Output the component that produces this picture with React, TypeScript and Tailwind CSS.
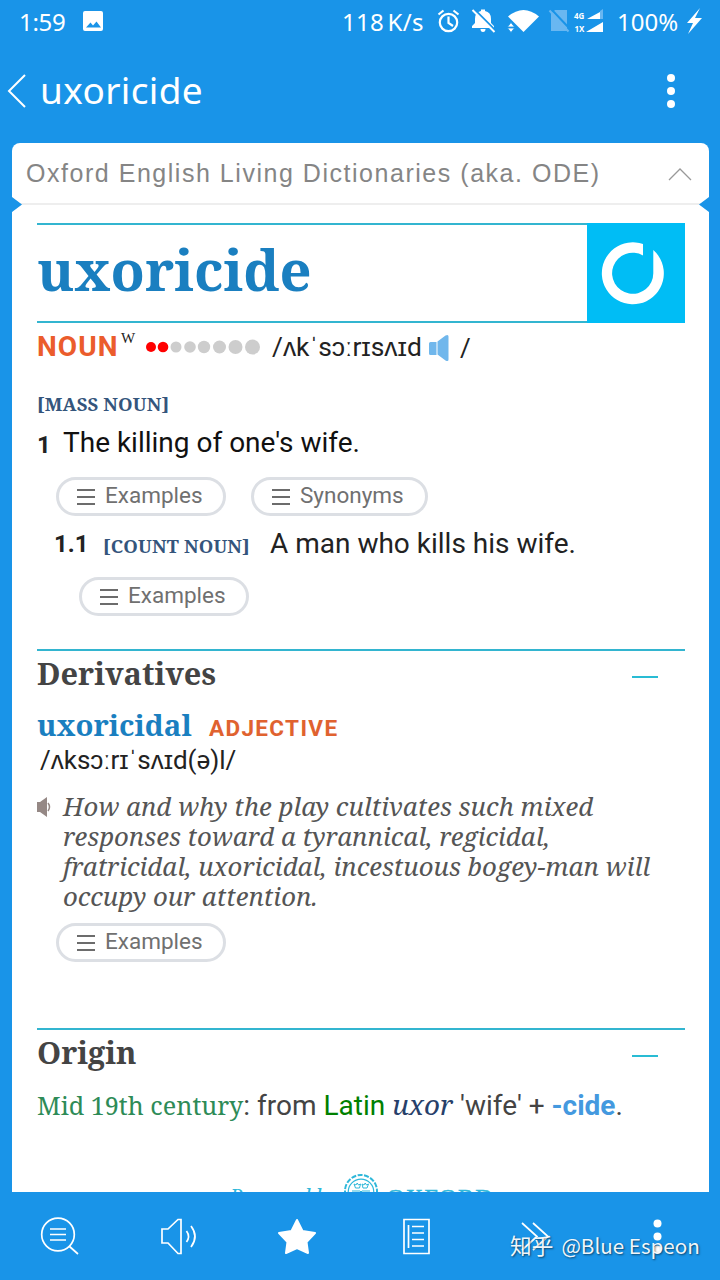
import React from "react";

const serif = "font-['Noto_Serif','DejaVu_Serif_Condensed','DejaVu_Serif',serif]";

function StatusBar() {
  return (
    <div className="flex h-[44px] items-center pl-[19px] font-['Noto_Sans',sans-serif] text-[24px] font-[370] text-white">
      <span className="w-[63px] tracking-[-0.300px]">1:59</span>
      <svg className="h-[44px] w-[22px]" viewBox="82 0 22 44" fill="#fff">
        <path fillRule="evenodd" d="M85 11h16q2 0 2 2v16q0 2-2 2H85q-2 0-2-2V13q0-2 2-2ZM86 27.500h15l-4.500-6-3.500 4-2.500-3Z" />
      </svg>
      <span className="ml-[238px] w-[92px] whitespace-nowrap tracking-[0.300px] [word-spacing:-3px]">118 K/s</span>
      <svg className="h-[44px] w-[172px]" viewBox="434 0 172 44" fill="none">
        <g stroke="#fff" strokeWidth="2.200">
          <circle cx="448.500" cy="22.500" r="8.700" />
          <path d="M448.500 16.500v6.500l4.500 3M438.500 14.500l5-4M458.500 14.500l-5-4" />
        </g>
        <path fill="#fff" d="M472 28v-2l3-3v-4q0-7 6-8V9.500h4V11q6 1 6 8v4l3 3v2ZM480.500 29h5q0 3-2.500 3t-2.500-3Z" />
        <path stroke="#1994e8" strokeWidth="2" d="m474 9 22 22" />
        <path stroke="#fff" strokeWidth="2" d="m472.500 10 22 22" />
        <path fill="#fff" d="M508 16.500Q523.500 3.500 539 16.500L523.500 32Z" />
        <path fill="#fff" stroke="#1994e8" strokeWidth="0.800" d="M511 22.500l3.500 4.500h-7ZM507.500 28h7l-3.500 4.500Z" />
        <path fill="#69b7f1" d="M555 10h12v21h-16V14Z" />
        <path stroke="#1994e8" strokeWidth="2" d="m551 9 19 20" />
        <path stroke="#69b7f1" strokeWidth="2" d="m549.500 10.500 19 21" />
        <path fill="#fff" d="m587 19 13-7v7ZM586 32l17-10v10Z" />
        <path fill="#69b7f1" d="m600 11 3-2v10h-3Z" />
        <text x="574" y="18.500" fill="#fff" fontSize="8" fontWeight="700" fontFamily="Noto Sans">4G</text>
        <text x="574.500" y="32" fill="#fff" fontSize="8" fontWeight="700" fontFamily="Noto Sans">1X</text>
      </svg>
      <span className="ml-[11px] w-[68px] whitespace-nowrap">100%</span>
      <svg className="h-[44px] w-[18px]" viewBox="685 0 18 44" fill="#fff">
        <path d="m700 8-13 15h6l-5 11 14-16h-7Z" />
      </svg>
    </div>
  );
}

function TitleBar() {
  return (
    <div className="flex h-[98px] items-center text-white">
      <svg className="h-[98px] w-[40px]" viewBox="0 44 40 98" fill="none" stroke="#fff" strokeWidth="2">
        <path d="m25 75-16 16 16 16" />
      </svg>
      <h1 className="w-[627px] -translate-y-[4px] font-['Noto_Sans',sans-serif] text-[37px] leading-none font-[380] tracking-[0.350px]">uxoricide</h1>
      <div className="flex -translate-y-[2px] flex-col gap-[5px]">
        <i className="size-[8px] rounded-full bg-white" />
        <i className="size-[8px] rounded-full bg-white" />
        <i className="size-[8px] rounded-full bg-white" />
      </div>
    </div>
  );
}

function Pill({ label, className }: { label: string; className: string }) {
  return (
    <button className={`flex h-[39px] items-center rounded-full border-[3px] border-[#dcdfe4] pl-[18px] font-[Roboto,sans-serif] text-[22.500px] text-[#707070] ${className}`}>
      <span className="mt-[1px] mr-[10px] flex w-[18px] flex-col gap-[5px]">
        <i className="h-[2px] bg-[#6c6c6c]" />
        <i className="h-[2px] bg-[#6c6c6c]" />
        <i className="h-[2px] bg-[#6c6c6c]" />
      </span>
      <span className="-mt-[2px]">{label}</span>
    </button>
  );
}

function SectionTitle({ title }: { title: string }) {
  return (
    <div className="flex h-[46px] shrink-0 items-center justify-between border-t-2 border-[#33b5d0] pr-[27px]">
      <h2 className={`mt-[1px] ${serif} text-[30.700px] leading-[41px] font-bold text-[#444]`}>{title}</h2>
      <i className="mt-[7px] h-[2px] w-[26px] bg-[#29bcd4]" />
    </div>
  );
}

function Frequency() {
  return (
    <svg className="h-[20px] w-[126px]" viewBox="140 338 126 20">
      <g fill="#f00"><circle cx="151" cy="348" r="5" /><circle cx="163" cy="348" r="5.300" /></g>
      <g fill="#cdcdcd">
        <circle cx="176" cy="348" r="5.500" /><circle cx="190" cy="348" r="5.800" />
        <circle cx="204" cy="348" r="6.200" /><circle cx="219.500" cy="348" r="6.500" />
        <circle cx="235.500" cy="348" r="7" /><circle cx="252.500" cy="348" r="7.500" />
      </g>
    </svg>
  );
}

function Entry() {
  return (
    <div className="flex h-[987px] flex-col overflow-hidden bg-white pt-[18px] pr-[24px] pl-[25px] font-[Roboto,sans-serif] text-[28px] whitespace-nowrap text-[#222]">
      <div className="flex h-[100px] shrink-0 border-y-2 border-[#33b5d0]">
        <h2 className={`flex-1 ${serif} pt-[2px] text-[56px] leading-[84px] font-bold text-[#1a7fc0]`}>uxoricide</h2>
        <div className="-my-[2px] w-[98px] bg-[#00bdf5]">
          <svg className="size-full" viewBox="587 223 98 100">
            <path fill="#fff" d="M643 244A31 31 0 1 0 653.300 250V273.300A20.600 20.600 0 1 1 643 255.400Z" />
          </svg>
        </div>
      </div>
      <div className="flex h-[48px] shrink-0 items-center">
        <span className="w-[84px] text-[28px] font-bold tracking-[1.100px] text-[#eb5c2c]">NOUN</span>
        <sup className="mr-[4px] w-[15px] -translate-y-[2px] font-['Liberation_Serif',serif] text-[15px]">W</sup>
        <Frequency />
        <span className="mt-[2px] ml-[6px] w-[156px] text-[26.400px]">/ʌkˈsɔːrɪsʌɪd</span>
        <svg className="mt-[1px] h-[28px] w-[23px]" viewBox="427.500 334 23 28" fill="#70b7ec">
          <path d="M430 342h6v13h-6q-1.500 0-1.500-1.500v-10q0-1.500 1.500-1.500ZM437 341.500l8-6q3-1.500 3 1v23q0 2.500-3 1l-8-6Z" />
        </svg>
        <span className="mt-[2px] ml-[9px] text-[26px]">/</span>
      </div>
      <div className={`mt-[17px] flex h-[31px] shrink-0 items-center ${serif} text-[18.500px] font-bold tracking-[0.150px] text-[#34557c]`}>[MASS NOUN]</div>
      <div className="mt-[1px] flex h-[44px] shrink-0 items-center">
        <b className="mt-[5px] w-[26px] text-[24px]">1</b>
        <span className="mt-[2px] text-[#111]">The killing of one's wife.</span>
      </div>
      <div className="mt-[13px] flex h-[39px] shrink-0 gap-[25px] pl-[19px]">
        <Pill label="Examples" className="w-[170px]" />
        <Pill label="Synonyms" className="w-[177px]" />
      </div>
      <div className="mt-[4px] flex h-[46px] shrink-0 items-center pl-[17px]">
        <b className="mt-[2px] w-[49px] text-[24px]">1.1</b>
        <span className={`mt-[5px] w-[167px] ${serif} text-[18.500px] font-bold tracking-[0.150px] text-[#34557c]`}>[COUNT NOUN]</span>
        <span className="mt-[2px]">A man who kills his wife.</span>
      </div>
      <div className="mt-[11px] mb-[33px] flex h-[39px] shrink-0 pl-[42px]">
        <Pill label="Examples" className="w-[170px]" />
      </div>
      <SectionTitle title="Derivatives" />
      <div className="mt-[5px] flex h-[52px] shrink-0 items-center">
        <span className={`w-[172px] ${serif} text-[29.300px] font-bold text-[#1a7fc0]`}>uxoricidal</span>
        <span className="mt-[6px] text-[22.500px] font-bold tracking-[1.350px] text-[#e0622f]">ADJECTIVE</span>
      </div>
      <div className="-mt-[7px] flex h-[30px] shrink-0 items-center pl-[3px] text-[26px]">/ʌksɔːrɪˈsʌɪd(ə)l/</div>
      <div className="mt-[16px] flex h-[120px] shrink-0">
        <svg className="mt-[6px] h-[20px] w-[26px]" viewBox="37 798 26 20">
          <path fill="#958885" d="M36 803h4l7-5v20l-7-5h-4Z" />
          <path fill="none" stroke="#958885" strokeWidth="1.500" d="M48 804q3 4 0 8" />
        </svg>
        <p className={`${serif} text-[25.750px] leading-[30px] text-[#555] italic`}>
          How and why the play cultivates such mixed<br />responses toward a tyrannical, regicidal,<br />fratricidal, uxoricidal, incestuous bogey-man will<br />occupy our attention.
        </p>
      </div>
      <div className="mt-[12px] mb-[66px] flex h-[39px] shrink-0 pl-[19px]">
        <Pill label="Examples" className="w-[170px]" />
      </div>
      <SectionTitle title="Origin" />
      <div className="mt-[10px] flex h-[46px] shrink-0 items-baseline whitespace-pre text-[#444]">
        <span className={`${serif} text-[25.200px] text-[#2e8b57]`}>Mid 19th century</span>
        <span>: from <span className="text-[#008000]">Latin</span> </span>
        <i className={`${serif} text-[27.800px] leading-[40px] text-[#27406a]`}>uxor</i>
        <span> 'wife' + <b className="text-[#4499df]">-cide</b>.</span>
      </div>
      <div className={`mt-[43px] flex h-[60px] shrink-0 ${serif} text-[#2fb8da]`}>
        <i className="mt-[8px] ml-[193px] w-[113px] text-[20px]">Powered by</i>
        <svg className="h-[40px] w-[36px]" viewBox="343 1173 36 40" fill="none" stroke="#2fb8da">
          <circle cx="361" cy="1191" r="16" strokeWidth="2" strokeDasharray="5 1.500" />
          <circle cx="361" cy="1192" r="12.800" strokeWidth="1.200" />
          <path d="M354 1184l1.500 4h4l1-4-2 1-1.300-2-1.200 2ZM362 1184l1 4h4l1.500-4-2 1-1.300-2-1.200 2ZM352 1191h8l1 1 1-1h8" />
        </svg>
        <span className="mt-[6px] ml-[8px] font-['Liberation_Serif',serif] text-[24px] tracking-[1.400px] [-webkit-text-stroke:0.500px_#2fb8da]">OXFORD</span>
      </div>
    </div>
  );
}

function Toolbar() {
  return (
    <div className="relative h-[88px]">
      <svg className="block h-[88px] w-[720px]" viewBox="0 1192 720 88" fill="none" stroke="#fff" strokeWidth="1.700">
        <circle cx="58" cy="1234.500" r="16.300" />
        <path d="m69 1246 9 8M50 1229h16M50 1234.500h16M50 1240h16" />
        <path d="M162 1229h6l10-9.500h3v34h-3l-10-10.500h-6ZM186.500 1231q4 5.500 0 11M191 1226q8 10.500 0 21" />
        <path fill="#fff" strokeLinejoin="round" strokeWidth="2" d="m297 1220 5.500 11 12.500 2-8.500 9 1.500 11-11-5-11 5 1.500-11-8.500-9 12.500-2Z" />
        <path d="M404 1219.500h25v34h-25ZM408.500 1225v23M412 1226.500h12M412 1233h12M412 1239.500h12M412 1246h12" />
        <path d="m522 1223 15 13.500-15 13.500M533 1223l15 13.500-15 13.500" />
        <g fill="#fff" stroke="none"><circle cx="657.500" cy="1223.500" r="4" /><circle cx="657.500" cy="1236.500" r="4" /><circle cx="657.500" cy="1249.500" r="4" /></g>
      </svg>
      <span className="absolute top-[37px] left-[510px] flex items-baseline gap-[8px] font-['Noto_Sans_CJK_SC',sans-serif] text-[21.700px] leading-[32px] whitespace-nowrap text-white/95 [text-shadow:1px_1px_2px_#0008]">
        <span>知乎</span><span className="text-[20.600px]">@Blue Espeon</span>
      </span>
    </div>
  );
}

export default function App() {
  return (
    <div className="h-[1280px] w-[720px] overflow-hidden bg-[#1994e8]">
      <StatusBar />
      <TitleBar />
      <main className="relative mt-[1px] mr-[11px] ml-[12px] h-[1049px]">
        <div className="flex h-[62px] items-center justify-between rounded-t-[8px] border-b-2 border-[#eee] bg-white pr-[17px] pl-[14px]">
          <span className="mt-[2px] font-['Liberation_Sans',sans-serif] text-[25px] tracking-[1.530px] text-[#858585]">Oxford English Living Dictionaries (aka. ODE)</span>
          <svg className="mt-[2px] h-[14px] w-[24px]" viewBox="0 0 24 14" fill="none" stroke="#999" strokeWidth="1.300"><path d="m1 13 11-11 11 11" /></svg>
        </div>
        <Entry />
        <svg className="absolute top-[54px] left-0 h-[15px] w-[697px]" viewBox="0 0 697 15" fill="#1994e8"><path d="m0 0 10 7.500L0 15ZM697 0l-10 7.500 10 7.500Z" /></svg>
      </main>
      <Toolbar />
    </div>
  );
}
